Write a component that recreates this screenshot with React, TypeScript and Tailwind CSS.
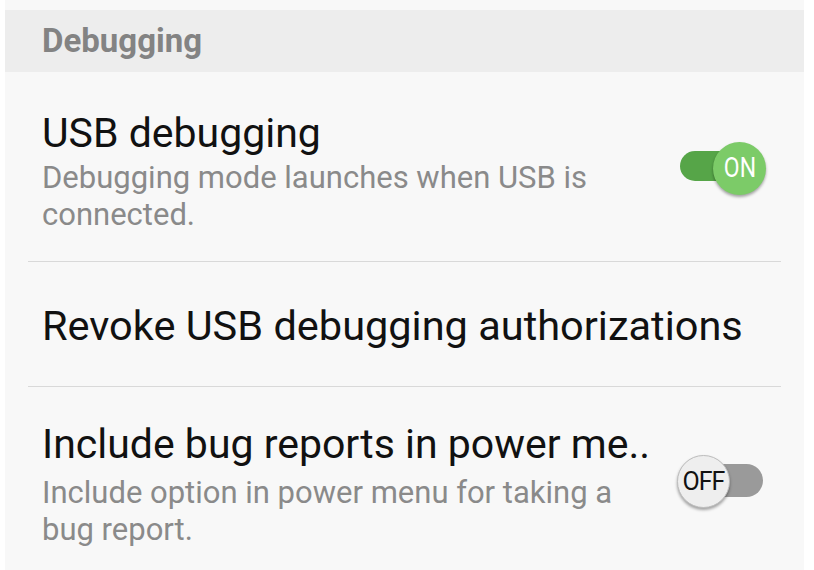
import React from "react";

const font = { fontFamily: "Roboto, 'Noto Sans', sans-serif" };

function Toggle({ on }: { on: boolean }) {
  if (on) {
    return (
      <div className="relative h-[56px] w-[86px] shrink-0">
        <div className="absolute left-0 top-[9px] h-[30px] w-[66px] rounded-full bg-[#56a548]" />
        <div className="absolute right-0 top-0 flex h-[53px] w-[53px] items-center justify-center rounded-full bg-[#7ccb68] text-[27px] text-white shadow-[0_2px_3px_rgba(0,0,0,0.35)]">
          <span className="inline-block scale-x-[0.85]">ON</span>
        </div>
      </div>
    );
  }
  return (
    <div className="relative h-[56px] w-[86px] shrink-0">
      <div className="absolute right-0 top-[9px] h-[33px] w-[62px] rounded-full bg-[#9a9a9a]" />
      <div className="absolute left-0 top-0 flex h-[53px] w-[53px] items-center justify-center rounded-full border border-[#bdbdbd] bg-[#eeeeee] text-[25px] tracking-[-1px] text-[#111] shadow-[0_2px_3px_rgba(0,0,0,0.35)]">
        OFF
      </div>
    </div>
  );
}

export default function App() {
  return (
    <div className="h-[570px] w-[814px] overflow-hidden bg-white" style={font}>
      <div className="ml-[5px] h-full w-[799px] bg-[#f8f8f8] pt-[10px]">
        <div className="flex h-[62px] items-center bg-[#ededed] pl-[37px] text-[33px] font-bold text-[#838383]">
          Debugging
        </div>

        <div className="mx-[23px] flex items-start border-b border-[#d9d9d9] pb-[28px] pl-[14px] pr-[15px] pt-[37px]">
          <div className="flex-1">
            <div className="text-[41px] leading-[48px] text-[#111]">USB debugging</div>
            <div className="mt-[2px] w-[570px] text-[31px] leading-[37px] text-[#8a8a8a]">
              Debugging mode launches when USB is connected.
            </div>
          </div>
          <div className="mt-[33px]">
            <Toggle on />
          </div>
        </div>

        <div className="mx-[23px] h-[125px] border-b border-[#d9d9d9] pl-[14px] pt-[40px] text-[41.5px] leading-[48px] text-[#111]">
          Revoke USB debugging authorizations
        </div>

        <div className="mx-[23px] flex items-start pl-[14px] pr-[18px] pt-[33px]">
          <div className="flex-1">
            <div className="text-[41px] leading-[48px] text-[#111]">Include bug reports in power me..</div>
            <div className="mt-[6px] w-[620px] text-[31px] leading-[37px] text-[#8a8a8a]">
              Include option in power menu for taking a bug report.
            </div>
          </div>
          <div className="mt-[35px]">
            <Toggle on={false} />
          </div>
        </div>
      </div>
    </div>
  );
}
